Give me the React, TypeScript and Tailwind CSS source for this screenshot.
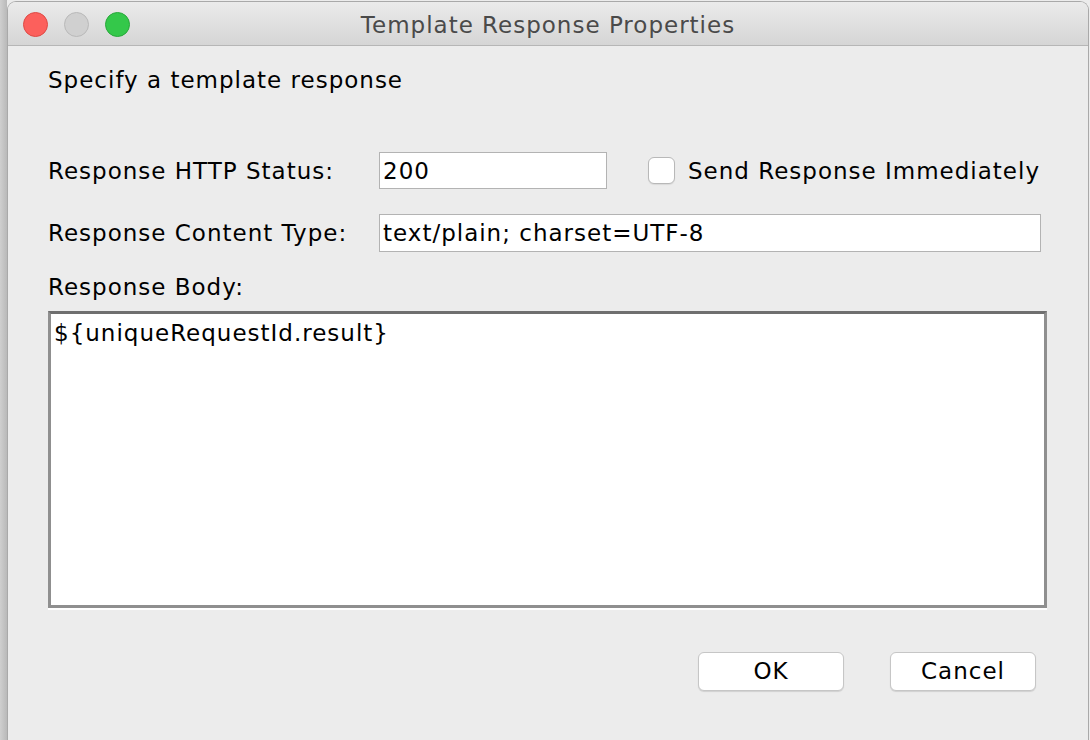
export default function App() {
  return (
    <div
      className="w-[1090px] h-[740px] flex bg-[#ececec] text-black overflow-hidden"
      style={{ fontFamily: '"DejaVu Sans", "Liberation Sans", sans-serif' }}
    >
      {/* shadow of the window behind */}
      <div className="w-[7px] h-full shrink-0 bg-gradient-to-r from-[#cfcfcf] to-[#b9b9b9]" />

      <div className="flex-1 flex flex-col mt-[1px] border-l border-r border-t border-[#a9a9a9] rounded-t-[9px] overflow-hidden bg-[#ececec]">
        {/* title bar */}
        <div className="h-[44px] shrink-0 flex items-center relative bg-gradient-to-b from-[#ebebeb] to-[#d5d5d5] border-b border-[#b6b6b6]">
          <div className="flex items-center gap-[16px] pl-[15px] pt-[2px]">
            <span className="w-[25px] h-[25px] rounded-full bg-[#fc605c] border border-[#de4a45]" />
            <span className="w-[25px] h-[25px] rounded-full bg-[#d0d0d0] border border-[#b9b9b9]" />
            <span className="w-[25px] h-[25px] rounded-full bg-[#34c84a] border border-[#28a83a]" />
          </div>
          <div className="absolute inset-0 pt-[3px] flex items-center justify-center text-[23px] tracking-[1px] text-[#4a4a4a] pointer-events-none">
            Template Response Properties
          </div>
        </div>

        {/* content */}
        <div className="flex flex-col pl-[40px] pr-[40px] text-[23px] tracking-[1px]">
          <div className="mt-[20px] leading-[28px]">Specify a template response</div>

          <div className="mt-[58px] flex items-center h-[37px]">
            <div className="w-[331px] shrink-0 pt-[1px]">Response HTTP Status:</div>
            <div className="w-[228px] h-[37px] shrink-0 bg-white border border-[#b3b3b3] flex items-center px-[3px] pt-[1px]">
              200
            </div>
            <div className="ml-[41px] w-[27px] h-[27px] shrink-0 rounded-[6px] bg-white border border-[#b8b8b8] shadow-[0_1px_1px_rgba(0,0,0,0.08)]" />
            <div className="ml-[13px] whitespace-nowrap pt-[1px]">Send Response Immediately</div>
          </div>

          <div className="mt-[25px] flex items-center h-[38px]">
            <div className="w-[331px] shrink-0">Response Content Type:</div>
            <div className="w-[662px] h-[38px] shrink-0 bg-white border border-[#b3b3b3] flex items-center px-[3px]">
              text/plain; charset=UTF-8
            </div>
          </div>

          <div className="mt-[21px] leading-[28px]">Response Body:</div>

          <div className="mt-[10px] w-[999px] h-[299px] shrink-0 border-b-2 border-white">
            <div className="w-full h-[297px] bg-white border-[3px] border-[#8f8f8f] border-t-[#6f6f6f] px-[3px] pt-[5px] leading-[28px]">
              {"${uniqueRequestId.result}"}
            </div>
          </div>

          <div className="mt-[42px] mr-[12px] flex justify-end gap-[46px]">
            <button className="w-[146px] h-[39px] bg-white border border-[#c6c6c6] rounded-[6px] shadow-[0_1px_1px_rgba(0,0,0,0.12)] tracking-[1px]">
              OK
            </button>
            <button className="w-[146px] h-[39px] bg-white border border-[#c6c6c6] rounded-[6px] shadow-[0_1px_1px_rgba(0,0,0,0.12)] tracking-[1px]">
              Cancel
            </button>
          </div>
        </div>
      </div>
      <div className="w-[1px] h-full shrink-0 bg-[#ececec]" />
    </div>
  );
}
